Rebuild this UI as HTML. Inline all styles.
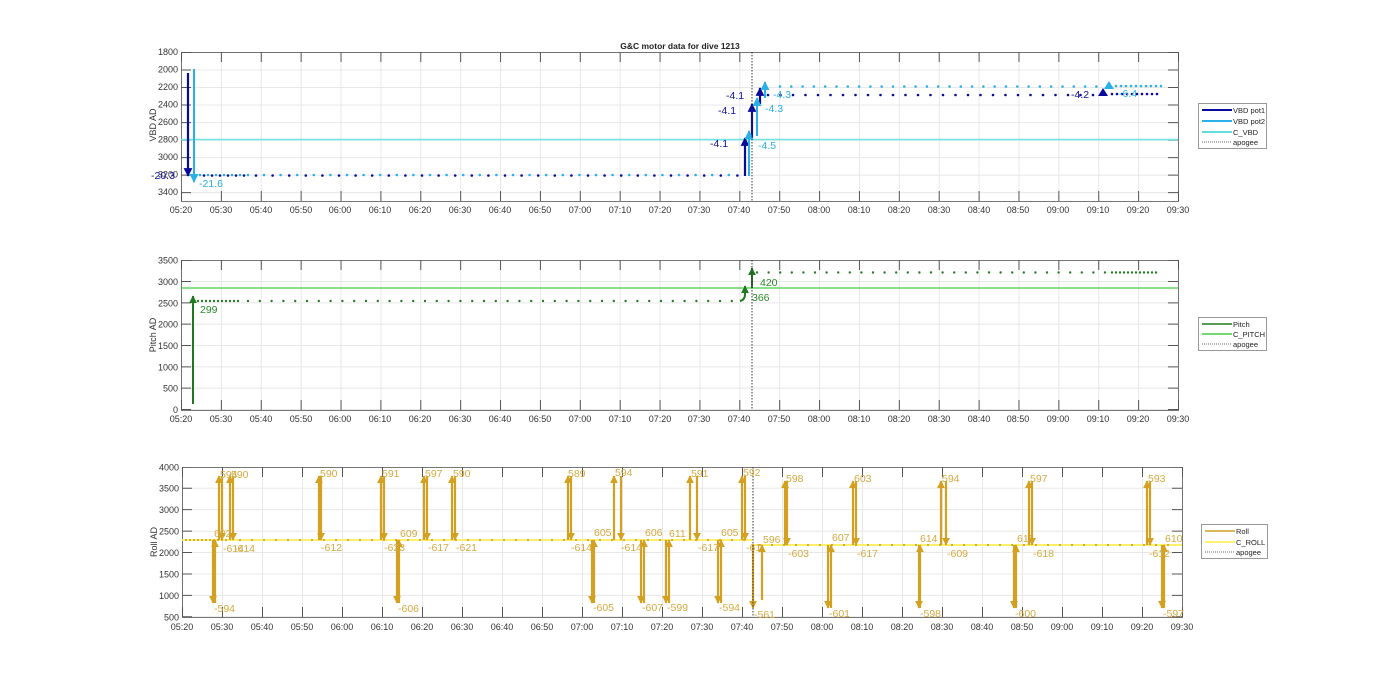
<!DOCTYPE html>
<html><head><meta charset="utf-8"><style>
html,body{margin:0;padding:0;background:#fff;}
svg{display:block;font-family:"Liberation Sans",sans-serif;}
.t{font-size:9px;fill:#333;}
.yl text{text-anchor:end;}
</style></head><body>
<svg width="1400" height="693" viewBox="0 0 1400 693" xmlns="http://www.w3.org/2000/svg">
<defs>
<marker id="mB" viewBox="0 0 10 10" refX="9" refY="5" markerWidth="4" markerHeight="4" orient="auto"><path d="M0 0L10 5L0 10Z" fill="#0a0a9a"/></marker>
<marker id="mC" viewBox="0 0 10 10" refX="9" refY="5" markerWidth="4.5" markerHeight="4.5" orient="auto"><path d="M0 0L10 5L0 10Z" fill="#2ab0e8"/></marker>
<marker id="mG" viewBox="0 0 10 10" refX="9" refY="5" markerWidth="4" markerHeight="4" orient="auto"><path d="M0 0L10 5L0 10Z" fill="#1f7a1f"/></marker>
<marker id="mR" viewBox="0 0 10 10" refX="9" refY="5" markerWidth="3.6" markerHeight="3.6" orient="auto"><path d="M0 0L10 5L0 10Z" fill="#d4a020"/></marker>
</defs>
<rect width="1400" height="693" fill="#fff"/>
<!-- grids -->
<g stroke="#e8e8e8" fill="none">
<line x1="181" y1="126.5" x2="1179" y2="126.5" stroke-width="149" stroke-dasharray="1 38.88"/>
<line x1="679.5" y1="52" x2="679.5" y2="201" stroke-width="997" stroke-dasharray="1 16.52"/>
<line x1="181" y1="335" x2="1179" y2="335" stroke-width="150" stroke-dasharray="1 38.88"/>
<line x1="679.5" y1="410" x2="679.5" y2="260" stroke-width="997" stroke-dasharray="1 20.33"/>
<line x1="182" y1="542" x2="1183" y2="542" stroke-width="150" stroke-dasharray="1 39"/>
<line x1="682" y1="617.3" x2="682" y2="467" stroke-width="1000" stroke-dasharray="1 20.43"/>
</g>
<!-- ticks -->
<g stroke="#555" fill="none">
<line x1="181" y1="196" x2="1179" y2="196" stroke-width="10" stroke-dasharray="1 38.88"/>
<line x1="181" y1="57" x2="1179" y2="57" stroke-width="10" stroke-dasharray="1 38.88"/>
<line x1="186" y1="52" x2="186" y2="201" stroke-width="10" stroke-dasharray="1 16.52"/>
<line x1="1173" y1="52" x2="1173" y2="201" stroke-width="10" stroke-dasharray="1 16.52"/>
<line x1="181" y1="405" x2="1179" y2="405" stroke-width="10" stroke-dasharray="1 38.88"/>
<line x1="181" y1="265" x2="1179" y2="265" stroke-width="10" stroke-dasharray="1 38.88"/>
<line x1="186" y1="410" x2="186" y2="260" stroke-width="10" stroke-dasharray="1 20.33"/>
<line x1="1173" y1="410" x2="1173" y2="260" stroke-width="10" stroke-dasharray="1 20.33"/>
<line x1="182" y1="612" x2="1183" y2="612" stroke-width="10" stroke-dasharray="1 39"/>
<line x1="182" y1="472" x2="1183" y2="472" stroke-width="10" stroke-dasharray="1 39"/>
<line x1="187" y1="617.3" x2="187" y2="467" stroke-width="10" stroke-dasharray="1 20.43"/>
<line x1="1177" y1="617.3" x2="1177" y2="467" stroke-width="10" stroke-dasharray="1 20.43"/>
<rect x="181.5" y="52.5" width="997" height="149" stroke-width="0.8"/>
<rect x="181.5" y="260.5" width="997" height="150" stroke-width="0.8"/>
<rect x="182.5" y="467.5" width="1000" height="150" stroke-width="0.8"/>
</g>
<!-- VBD data -->
<line x1="181" y1="139.6" x2="1178" y2="139.6" stroke="#72e2e2" stroke-width="1.6"/>
<g stroke-linecap="round" stroke-width="2.6" fill="none">
<line x1="196" y1="175.5" x2="250" y2="175.5" stroke="#0a0a9a" stroke-dasharray="0 8"/>
<line x1="200" y1="175" x2="250" y2="175" stroke="#2ab0e8" stroke-dasharray="0 8"/>
<line x1="256" y1="175.5" x2="740" y2="175.5" stroke="#0a0a9a" stroke-dasharray="0 16.6"/>
<line x1="264" y1="175" x2="730" y2="175" stroke="#2ab0e8" stroke-dasharray="0 16.6"/>
<line x1="768" y1="95" x2="1100" y2="95" stroke="#0a0a9a" stroke-dasharray="0 12.5"/>
<line x1="780" y1="86.5" x2="1110" y2="86.5" stroke="#2ab0e8" stroke-dasharray="0 11.3"/>
<line x1="1112" y1="94" x2="1162" y2="94" stroke="#0a0a9a" stroke-dasharray="0 5"/>
<line x1="1116" y1="86" x2="1166" y2="86" stroke="#2ab0e8" stroke-dasharray="0 5"/>
</g>
<g stroke="#0a0a9a" stroke-width="2.2" marker-end="url(#mB)">
<line x1="188" y1="73" x2="188" y2="176"/>
<line x1="745" y1="176" x2="745" y2="138"/>
<line x1="752" y1="138" x2="752" y2="104"/>
<line x1="760" y1="104" x2="760" y2="88"/>
</g>
<g stroke="#2ab0e8" stroke-width="2" marker-end="url(#mC)">
<line x1="194" y1="69" x2="194" y2="182"/>
<line x1="749" y1="176" x2="749" y2="131"/>
<line x1="757" y1="136" x2="757" y2="98"/>
<line x1="765" y1="98" x2="765" y2="82"/>
</g>
<path d="M1098 96L1108 96L1103 88Z" fill="#0a0a9a"/><path d="M1104 89L1114 89L1109 81Z" fill="#2ab0e8"/>
<!-- Pitch data -->
<line x1="181" y1="288" x2="1178" y2="288" stroke="#44cc44" stroke-width="1.3"/>
<g stroke="#2a7a2a" stroke-linecap="round" stroke-width="2.4" fill="none">
<line x1="198" y1="301" x2="240" y2="301" stroke-dasharray="0 4"/>
<line x1="248" y1="301" x2="735" y2="301" stroke-dasharray="0 11.8"/>
<line x1="757" y1="272.5" x2="1108" y2="272.5" stroke-dasharray="0 11.6"/>
<line x1="1112" y1="272.5" x2="1160" y2="272.5" stroke-dasharray="0 4"/>
</g>
<g stroke="#1f7a1f" stroke-width="2" fill="none" marker-end="url(#mG)">
<line x1="193" y1="404" x2="193" y2="296"/>
<path d="M740 301Q745 300 745 294L745 286"/>
<line x1="752" y1="288" x2="752" y2="268"/>
</g>
<!-- Roll data -->
<line x1="182" y1="540" x2="752" y2="540" stroke="#ffee55" stroke-width="1.8"/>
<line x1="752" y1="545" x2="1182" y2="545" stroke="#ffee55" stroke-width="1.8"/>
<g stroke="#c09a30" stroke-linecap="round" stroke-width="2" fill="none">
<line x1="186" y1="540" x2="230" y2="540" stroke-dasharray="0 4"/>
<line x1="240" y1="540" x2="745" y2="540" stroke-dasharray="0 12"/>
<line x1="760" y1="545" x2="1175" y2="545" stroke-dasharray="0 12"/>
</g>
<g stroke="#d4a020" stroke-width="2.2" marker-end="url(#mR)">
<line x1="219" y1="540" x2="219" y2="476"/><line x1="222" y1="476" x2="222" y2="540"/>
<line x1="230" y1="540" x2="230" y2="476"/><line x1="233" y1="476" x2="233" y2="540"/>
<line x1="319" y1="540" x2="319" y2="476"/><line x1="321" y1="476" x2="321" y2="540"/>
<line x1="381" y1="540" x2="381" y2="476"/><line x1="384" y1="476" x2="384" y2="540"/>
<line x1="424" y1="540" x2="424" y2="476"/><line x1="427" y1="476" x2="427" y2="540"/>
<line x1="452" y1="540" x2="452" y2="476"/><line x1="455" y1="476" x2="455" y2="540"/>
<line x1="568" y1="540" x2="568" y2="476"/><line x1="571" y1="476" x2="571" y2="540"/>
<line x1="614" y1="540" x2="614" y2="476"/><line x1="621" y1="476" x2="621" y2="540"/>
<line x1="690" y1="540" x2="690" y2="476"/><line x1="697" y1="476" x2="697" y2="540"/>
<line x1="742" y1="540" x2="742" y2="476"/><line x1="745" y1="476" x2="745" y2="540"/>
<line x1="785" y1="545" x2="785" y2="481"/><line x1="787" y1="481" x2="787" y2="545"/>
<line x1="853" y1="545" x2="853" y2="481"/><line x1="856" y1="481" x2="856" y2="545"/>
<line x1="941" y1="545" x2="941" y2="481"/><line x1="946" y1="481" x2="946" y2="545"/>
<line x1="1029" y1="545" x2="1029" y2="481"/><line x1="1032" y1="481" x2="1032" y2="545"/>
<line x1="1147" y1="545" x2="1147" y2="481"/><line x1="1150" y1="481" x2="1150" y2="545"/>
<line x1="213" y1="540" x2="213" y2="603"/><line x1="215" y1="603" x2="215" y2="540"/>
<line x1="397" y1="540" x2="397" y2="603"/><line x1="399" y1="603" x2="399" y2="540"/>
<line x1="592" y1="540" x2="592" y2="603"/><line x1="594" y1="603" x2="594" y2="540"/>
<line x1="641" y1="540" x2="641" y2="603"/><line x1="644" y1="603" x2="644" y2="540"/>
<line x1="666" y1="540" x2="666" y2="603"/><line x1="669" y1="603" x2="669" y2="540"/>
<line x1="718" y1="540" x2="718" y2="603"/><line x1="721" y1="603" x2="721" y2="540"/>
<line x1="753" y1="545" x2="753" y2="608"/><line x1="762" y1="600" x2="762" y2="545"/>
<line x1="828" y1="545" x2="828" y2="608"/><line x1="831" y1="608" x2="831" y2="545"/>
<line x1="919" y1="545" x2="919" y2="608"/><line x1="920" y1="608" x2="920" y2="545"/>
<line x1="1014" y1="545" x2="1014" y2="608"/><line x1="1016" y1="608" x2="1016" y2="545"/>
<line x1="1162" y1="545" x2="1162" y2="608"/><line x1="1164" y1="608" x2="1164" y2="545"/>
</g>
<!-- apogee -->
<g stroke="#333" stroke-width="1" stroke-dasharray="1.5,1.5">
<line x1="752" y1="52" x2="752" y2="201"/><line x1="752" y1="260" x2="752" y2="410"/><line x1="753" y1="467" x2="753" y2="617"/>
</g>
<text x="680" y="49" text-anchor="middle" font-size="8.5" font-weight="bold" fill="#222">G&amp;C motor data for dive 1213</text>
<g class="t" text-anchor="middle">
<text y="213"><tspan x="181">05:20</tspan><tspan x="221">05:30</tspan><tspan x="261">05:40</tspan><tspan x="301">05:50</tspan><tspan x="340">06:00</tspan><tspan x="380">06:10</tspan><tspan x="420">06:20</tspan><tspan x="460">06:30</tspan><tspan x="500">06:40</tspan><tspan x="540">06:50</tspan><tspan x="580">07:00</tspan><tspan x="620">07:10</tspan><tspan x="660">07:20</tspan><tspan x="699">07:30</tspan><tspan x="739">07:40</tspan><tspan x="779">07:50</tspan><tspan x="819">08:00</tspan><tspan x="859">08:10</tspan><tspan x="899">08:20</tspan><tspan x="939">08:30</tspan><tspan x="979">08:40</tspan><tspan x="1018">08:50</tspan><tspan x="1058">09:00</tspan><tspan x="1098">09:10</tspan><tspan x="1138">09:20</tspan><tspan x="1178">09:30</tspan></text>
<text y="422"><tspan x="181">05:20</tspan><tspan x="221">05:30</tspan><tspan x="261">05:40</tspan><tspan x="301">05:50</tspan><tspan x="340">06:00</tspan><tspan x="380">06:10</tspan><tspan x="420">06:20</tspan><tspan x="460">06:30</tspan><tspan x="500">06:40</tspan><tspan x="540">06:50</tspan><tspan x="580">07:00</tspan><tspan x="620">07:10</tspan><tspan x="660">07:20</tspan><tspan x="699">07:30</tspan><tspan x="739">07:40</tspan><tspan x="779">07:50</tspan><tspan x="819">08:00</tspan><tspan x="859">08:10</tspan><tspan x="899">08:20</tspan><tspan x="939">08:30</tspan><tspan x="979">08:40</tspan><tspan x="1018">08:50</tspan><tspan x="1058">09:00</tspan><tspan x="1098">09:10</tspan><tspan x="1138">09:20</tspan><tspan x="1178">09:30</tspan></text>
<text y="630"><tspan x="182">05:20</tspan><tspan x="222">05:30</tspan><tspan x="262">05:40</tspan><tspan x="302">05:50</tspan><tspan x="342">06:00</tspan><tspan x="382">06:10</tspan><tspan x="422">06:20</tspan><tspan x="462">06:30</tspan><tspan x="502">06:40</tspan><tspan x="542">06:50</tspan><tspan x="582">07:00</tspan><tspan x="622">07:10</tspan><tspan x="662">07:20</tspan><tspan x="702">07:30</tspan><tspan x="742">07:40</tspan><tspan x="782">07:50</tspan><tspan x="822">08:00</tspan><tspan x="862">08:10</tspan><tspan x="902">08:20</tspan><tspan x="942">08:30</tspan><tspan x="982">08:40</tspan><tspan x="1022">08:50</tspan><tspan x="1062">09:00</tspan><tspan x="1102">09:10</tspan><tspan x="1142">09:20</tspan><tspan x="1182">09:30</tspan></text>
</g>
<g class="t yl">
<text x="178" y="55">1800</text><text x="178" y="72.5">2000</text><text x="178" y="90">2200</text><text x="178" y="107.6">2400</text><text x="178" y="125.1">2600</text><text x="178" y="142.6">2800</text><text x="178" y="160.1">3000</text><text x="178" y="177.6">3200</text><text x="178" y="195.2">3400</text>
<text x="178" y="413">0</text><text x="178" y="391.7">500</text><text x="178" y="370.3">1000</text><text x="178" y="349">1500</text><text x="178" y="327.7">2000</text><text x="178" y="306.3">2500</text><text x="178" y="285">3000</text><text x="178" y="263.7">3500</text>
<text x="179" y="620.3">500</text><text x="179" y="598.9">1000</text><text x="179" y="577.4">1500</text><text x="179" y="556">2000</text><text x="179" y="534.6">2500</text><text x="179" y="513.2">3000</text><text x="179" y="491.7">3500</text><text x="179" y="470.3">4000</text>
</g>
<g class="t" text-anchor="middle">
<text transform="translate(156,125) rotate(-90)">VBD AD</text>
<text transform="translate(156,335) rotate(-90)">Pitch AD</text>
<text transform="translate(157,542) rotate(-90)">Roll AD</text>
</g>
<g font-size="10.5">
<text x="151" y="179" fill="#1010a0">-20.3</text>
<text x="199" y="187" fill="#2ab0e8">-21.6</text>
<text x="710" y="147" fill="#1010a0">-4.1</text>
<text x="718" y="114" fill="#1010a0">-4.1</text>
<text x="726" y="99" fill="#1010a0">-4.1</text>
<text x="758" y="149" fill="#2ab0e8">-4.5</text>
<text x="765" y="112" fill="#2ab0e8">-4.3</text>
<text x="773" y="98" fill="#2ab0e8">-4.3</text>
<text x="1071" y="98" fill="#1010a0">-4.2</text>
<text x="1119" y="97" fill="#2ab0e8">-6.4</text>
</g>
<g font-size="10.5" fill="#2a8a2a">
<text x="200" y="313">299</text>
<text x="752" y="301">366</text>
<text x="760" y="286">420</text>
</g>
<g font-size="10.5" fill="#d4aa40">
<text x="214" y="537">602</text><text x="214" y="612">-594</text>
<text x="220" y="478">594</text><text x="223" y="552">-614</text>
<text x="231" y="478">590</text><text x="234" y="552">-614</text>
<text x="320" y="477">590</text><text x="321" y="551">-612</text>
<text x="382" y="477">591</text><text x="384" y="551">-623</text>
<text x="400" y="537">609</text><text x="398" y="612">-606</text>
<text x="425" y="477">597</text><text x="428" y="551">-617</text>
<text x="453" y="477">590</text><text x="456" y="551">-621</text>
<text x="568" y="477">589</text><text x="571" y="551">-614</text>
<text x="594" y="536">605</text><text x="593" y="611">-605</text>
<text x="615" y="476">594</text><text x="621" y="551">-614</text>
<text x="645" y="536">606</text><text x="642" y="611">-607</text>
<text x="669" y="537">611</text><text x="667" y="611">-599</text>
<text x="691" y="477">591</text><text x="698" y="551">-617</text>
<text x="721" y="536">605</text><text x="719" y="611">-594</text>
<text x="743" y="476">592</text><text x="746" y="551">-61</text>
<text x="763" y="543">596</text><text x="754" y="618">-561</text>
<text x="786" y="482">598</text><text x="788" y="557">-603</text>
<text x="832" y="541">607</text><text x="829" y="617">-601</text>
<text x="854" y="482">603</text><text x="857" y="557">-617</text>
<text x="920" y="542">614</text><text x="920" y="617">-598</text>
<text x="942" y="482">594</text><text x="947" y="557">-609</text>
<text x="1017" y="542">611</text><text x="1015" y="617">-600</text>
<text x="1030" y="482">597</text><text x="1033" y="557">-618</text>
<text x="1148" y="482">593</text><text x="1149" y="557">-612</text>
<text x="1165" y="542">610</text><text x="1163" y="617">-597</text>
</g>
<g font-size="7.5" fill="#222">
<rect x="1198.5" y="103.5" width="68" height="45" fill="#fff" stroke="#999"/>
<line x1="1202" y1="110" x2="1232" y2="110" stroke="#0a0a9a" stroke-width="2"/><text x="1233" y="113">VBD pot1</text>
<line x1="1202" y1="121" x2="1232" y2="121" stroke="#2ab0e8" stroke-width="2"/><text x="1233" y="124">VBD pot2</text>
<line x1="1202" y1="132" x2="1232" y2="132" stroke="#66dede" stroke-width="2"/><text x="1233" y="135">C_VBD</text>
<line x1="1202" y1="142" x2="1232" y2="142" stroke="#666" stroke-dasharray="1,1"/><text x="1233" y="145">apogee</text>
<rect x="1198.5" y="317.5" width="68" height="33" fill="#fff" stroke="#999"/>
<line x1="1202" y1="324" x2="1232" y2="324" stroke="#1f7a1f" stroke-width="1.5"/><text x="1233" y="327">Pitch</text>
<line x1="1202" y1="334" x2="1232" y2="334" stroke="#44cc44" stroke-width="1.5"/><text x="1233" y="337">C_PITCH</text>
<line x1="1202" y1="344" x2="1232" y2="344" stroke="#666" stroke-dasharray="1,1"/><text x="1233" y="347">apogee</text>
<rect x="1201.5" y="524.5" width="66" height="34" fill="#fff" stroke="#999"/>
<line x1="1205" y1="531" x2="1235" y2="531" stroke="#d4a020" stroke-width="1.5"/><text x="1236" y="534">Roll</text>
<line x1="1205" y1="542" x2="1235" y2="542" stroke="#ffee44" stroke-width="1.5"/><text x="1236" y="545">C_ROLL</text>
<line x1="1205" y1="552" x2="1235" y2="552" stroke="#666" stroke-dasharray="1,1"/><text x="1236" y="555">apogee</text>
</g>
</svg>
</body></html>
